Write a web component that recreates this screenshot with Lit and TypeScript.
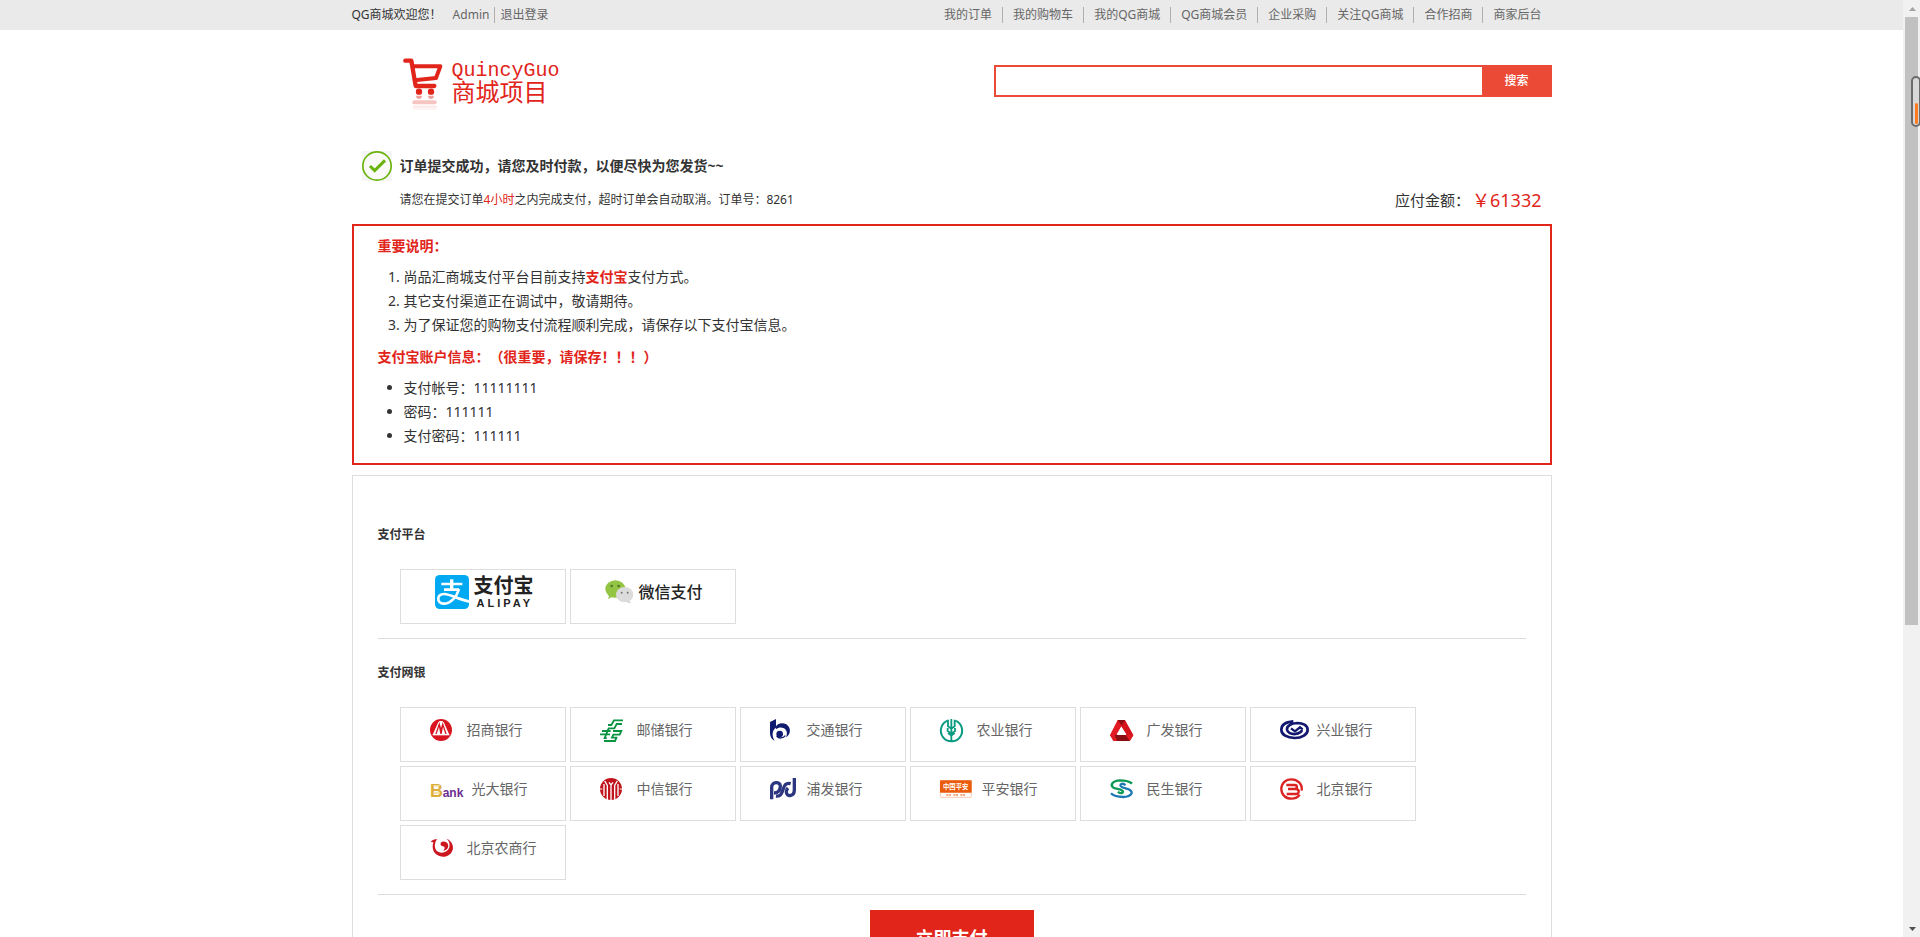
import { LitElement, html, css, svg, TemplateResult } from "lit";
import { customElement, state } from "lit/decorators.js";

interface PayOption {
  id: string;
  name: string;
  icon: TemplateResult;
  wide?: boolean;
}

const TOP_LINKS = [
  "我的订单",
  "我的购物车",
  "我的QG商城",
  "QG商城会员",
  "企业采购",
  "关注QG商城",
  "合作招商",
  "商家后台",
];

/* Glyphs are drawn on a grid three times finer than their size on the page. */
const glyph = (w: number, h: number, body: unknown) => html`
  <svg width=${w} height=${h} viewBox="0 0 ${w * 3} ${h * 3}" fill="none" aria-hidden="true">${body}</svg>
`;

const cartLogo = glyph(40, 54, svg`
  <g stroke="#e1251b" stroke-linecap="round" stroke-linejoin="round">
    <path stroke-width="13" d="M7 8H25L38 84H94"/>
    <path stroke-width="12" d="M34 25H112L99 60L42 66"/>
  </g>
  <circle cx="48" cy="101" r="9.5" fill="#e1251b"/>
  <circle cx="84" cy="101" r="9.5" fill="#e1251b"/>
  <path d="M39 113H57C57 126 39 126 39 113ZM75 113H93C93 126 75 126 75 113Z" fill="#f0a09c"/>
  <rect x="28" y="127" width="73" height="12" rx="6" fill="#f6c4c1"/>
  <rect x="29" y="143" width="72" height="6" fill="#fbe6e5"/>
  <rect x="30" y="149" width="70" height="7" fill="#fdf4f4"/>
`);

const checkIcon = glyph(30, 30, svg`
  <rect width="90" height="90" fill="#f5f5f5"/>
  <circle cx="45" cy="45" r="42.5" fill="#f9faf7" stroke="#6ab30c" stroke-width="5"/>
  <path d="M24 45L38 59L69 28" stroke="#6ab30c" stroke-width="9"/>
`);

const alipayIcon = glyph(34, 34, svg`
  <rect width="102" height="102" rx="14" fill="#00a9f1"/>
  <g stroke="#fff">
    <path stroke-width="8" d="M19 27H82M27 44H72"/>
    <path stroke-width="10" d="M50 13V46"/>
    <path stroke-width="8" d="M72 42C66 64 48 86 26 86C4 86 4 56 28 57C48 58 70 74 104 80"/>
  </g>
`);

const wechatIcon = glyph(29, 24, svg`
  <path d="M13 47L9 57L20 51Z" fill="#86b938"/>
  <ellipse cx="31" cy="27" rx="30" ry="26" fill="#93c444"/>
  <path d="M70 58L78 70L60 65Z" fill="#cfcfcf"/>
  <ellipse cx="59" cy="44" rx="26" ry="23" fill="#dcdcdc"/>
  <g fill="#55752a"><circle cx="20" cy="18" r="4"/><circle cx="41" cy="18" r="4"/></g>
  <g fill="#777"><circle cx="50" cy="38" r="3"/><circle cx="68" cy="38" r="3"/></g>
`);

const BANKS: PayOption[] = [
  { id: "cmb", name: "招商银行", icon: glyph(22, 22, svg`
    <circle cx="33" cy="33" r="33" fill="#d9141e"/>
    <path d="M8 47H58" stroke="#fff" stroke-width="4"/>
    <path d="M9 45L25 9L28 9L16 45ZM57 45L41 9L38 9L50 45Z" fill="#fff"/>
    <path d="M27 6L33 27L39 6ZM20 45L27 24L31 45ZM35 45L39 24L46 45Z" fill="#fff"/>`) },
  { id: "psbc", name: "邮储银行", icon: glyph(23, 23, svg`
    <g stroke="#0a9340" stroke-width="5.500">
      <path d="M69 4H42L34 18H24M66 15H50L43 28H26L14 57H20"/>
      <path d="M32 36H6M30 46H0M39 36H64L59 47H40L36 56H52M12 66H45L50 55"/>
    </g>`) },
  { id: "bcm", name: "交通银行", icon: glyph(20, 22, svg`
    <path d="M0 9L18 0V26C7 34 4 48 14 65C5 61 0 53 0 42Z" fill="#101a6e"/>
    <path d="M18 22C24 12 38 10 49 16C64 26 63 46 48 55C54 42 50 31 40 27C33 24 25 25 18 31Z" fill="#101a6e"/>
    <circle cx="29" cy="45" r="10" fill="#101a6e"/>
    <path d="M20 51C27 60 40 58 46 50" stroke="#101a6e" stroke-width="4"/>`) },
  { id: "abc", name: "农业银行", icon: glyph(23, 23, svg`
    <path d="M23 5A32 32 0 1 0 46 5" stroke="#0b9a82" stroke-width="6"/>
    <path d="M34 0V67M24 2V22L34 29L44 22V2M23 27V36L34 44L45 36V27M24 42L34 50L44 42" stroke="#0b9a82" stroke-width="5.500"/>`) },
  { id: "cgb", name: "广发银行", icon: glyph(24, 21, svg`
    <path d="M23 0H45L35 17L13 60L0 45Z" fill="#e21b22"/>
    <path d="M45 0L70 45L59 63L31 14L23 0Z" fill="#d5131b"/>
    <path d="M14 45H70L59 63H12L0 46Z" fill="#8c0d12"/>
    <path d="M23 0H45L35 16Z" fill="#8c0d12"/>
    <path d="M0 45H14L21 63H10Z" fill="#e21b22"/>
    <path d="M70 45L59 63L47 45Z" fill="#e21b22"/>
    <path d="M34 20L49 43H20Z" fill="#fff"/>`) },
  { id: "cib", name: "兴业银行", icon: glyph(29, 20, svg`
    <path d="M40 4C16 6 4 16 4 29C4 44 21 54 44 54C66 54 83 43 83 29C83 16 68 9 52 9C32 10 20 19 21 29C22 38 34 43 46 42C58 41 66 35 65 29" stroke="#12186f" stroke-width="8"/>
    <path d="M33 25L45 34L60 22L68 28" stroke="#12186f" stroke-width="7"/>`) },
  { id: "ceb", name: "光大银行", wide: true, icon: glyph(36, 20, svg`
    <g font-family="Liberation Sans, sans-serif" font-weight="bold">
      <text x="0" y="53" font-size="54" fill="#dcae3a">B</text>
      <text x="38" y="53" font-size="36" fill="#6a2c91">ank</text>
    </g>
    <path d="M10 20H30M10 42H30" stroke="#f1d98f" stroke-width="4"/>`) },
  { id: "citic", name: "中信银行", icon: glyph(22, 22, svg`
    <circle cx="33" cy="33" r="33" fill="#c1141c"/>
    <path d="M33 20V66M22 66V22L14 9M44 66V22L52 9M12 54V18M54 54V18M27 13L33 21L39 13" stroke="#fff" stroke-width="4"/>
    <path d="M0 33H7M59 33H66" stroke="#fff" stroke-width="3"/>`) },
  { id: "spdb", name: "浦发银行", icon: glyph(27, 22, svg`
    <g stroke="#2c3580" stroke-width="10">
      <path d="M5 64V28C5 10 31 9 31 25C31 38 25 45 12 45"/>
      <path d="M18 54C34 56 36 44 40 32C44 18 50 14 62 17"/>
      <path d="M73 0V36C73 56 49 58 49 42C49 36 51 33 54 30"/>
    </g>`) },
  { id: "pab", name: "平安银行", wide: true, icon: glyph(32, 18, svg`
    <rect x="1" y="2" width="93" height="50" rx="3" fill="#fff" stroke="#f3b08a" stroke-width="2"/>
    <rect x="0" y="1" width="95" height="37" rx="3" fill="#ea5b0c"/>
    <text x="47" y="27" font-size="19" font-weight="bold" text-anchor="middle" fill="#fff" font-family="Noto Sans CJK SC, sans-serif">中国平安</text>
    <path d="M19 45H34M40 45H55M61 45H76" stroke="#ef8a52" stroke-width="5" stroke-dasharray="6 2"/>`) },
  { id: "cmbc", name: "民生银行", icon: glyph(24, 20, svg`
    <g stroke-width="7">
      <path d="M66 14C56 4 42 4 30 4C8 5 0 17 9 25C16 31 32 29 38 36C42 42 30 46 24 38" stroke="#0b9a55"/>
      <path d="M3 43C13 54 28 54 40 54C62 53 71 42 61 34C54 27 37 29 32 21C29 14 40 11 46 19" stroke="#1b78b4"/>
    </g>`) },
  { id: "bob", name: "北京银行", icon: glyph(23, 22, svg`
    <path d="M65 38C68 17 52 4 34 4C16 4 4 17 4 33C4 49 16 62 34 62C44 62 54 58 59 50" stroke="#dc2323" stroke-width="7"/>
    <path d="M19 21H44C53 21 53 33 44 33H24M24 33H48C60 34 58 48 48 48H20" stroke="#dc2323" stroke-width="7"/>`) },
  { id: "bjrcb", name: "北京农商行", icon: glyph(24, 20, svg`
    <path d="M2 12C6 5 14 2 22 4C14 12 12 26 18 36C28 49 52 47 58 28C61 18 57 9 50 2C64 8 72 22 68 36C62 54 44 60 28 54C12 48 4 34 10 13Z" fill="#cc1620"/>
    <path d="M32 15C36 8 50 9 54 19C57 29 50 38 40 38C46 32 45 26 39 25C34 24 30 20 32 15Z" fill="#cc1620"/>`) },
];

@customElement("app-root")
export class AppRoot extends LitElement {
  @state() private selected = "";

  static styles = css`
    :host {
      display: flex;
      height: 100vh;
      overflow: hidden;
      background: #fff;
      color: #333;
      font: 12px/18px "Noto Sans", "Noto Sans CJK SC", sans-serif;
      text-spacing-trim: space-all;
    }
    * { box-sizing: border-box; }
    svg { display: block; flex: none; overflow: visible; }
    a { color: #666; text-decoration: none; }
    h1, h2, h3, p, ol, ul { margin: 0; padding: 0; }
    .page { flex: 1; min-width: 0; overflow: auto; scrollbar-width: none; }
    .wrap { max-width: 1200px; margin: 0 auto; }

    .topbar { background: #eaeaea; }
    .topbar .wrap { display: flex; justify-content: space-between; align-items: center; height: 30px; }
    .user { display: flex; align-items: center; line-height: 16px; }
    .user a { padding-left: 11px; }
    .user a + a { margin-left: 5px; padding-left: 5px; border-left: 1px solid #b3aeae; }
    .links { display: flex; list-style: none; line-height: 16px; }
    .links li { padding: 0 10px; }
    .links li + li { border-left: 1px solid #b3aeae; }

    .header { display: flex; justify-content: space-between; align-items: flex-start; padding: 28px 0 39px; }
    .logo { display: flex; gap: 9px; padding-left: 51px; color: #e1251b; }
    .logo-text { display: flex; flex-direction: column; padding-top: 1px; font: 20px/24px "Liberation Mono", "Noto Sans CJK SC", monospace; }
    .logo-sub { font-size: 24px; }
    .search { display: flex; width: 558px; margin-top: 7px; }
    .search input { flex: 1; min-width: 0; height: 32px; padding: 0 4px; border: 2px solid #ea4a36; border-right: 0; outline: 0; background: #fff; font: inherit; }
    .search button { width: 70px; height: 32px; padding: 0; border: 0; background: #ea4a36; color: #fff; font: inherit; font-weight: 500; cursor: pointer; }

    .success { padding: 0 10px; }
    .success-title { display: flex; align-items: center; gap: 8px; font-size: 14px; line-height: 30px; font-weight: bold; }
    .success-info { display: flex; justify-content: space-between; align-items: center; height: 38px; padding-left: 38px; }
    .red { color: #e1251b; }
    .amount { display: flex; align-items: center; gap: 2px; font-size: 15px; }
    .money { font-size: 18px; }

    .notice { margin-top: 5px; padding: 6px 24px 9px; border: 2px solid #e1251b; font-size: 14px; line-height: 24px; }
    .notice h2 { font-size: 14px; line-height: 28px; color: #e1251b; }
    .notice ol, .notice ul { padding: 5px 0 6px 26px; }

    .pay { margin-top: 10px; padding: 42px 25px; border: 1px solid #ddd; }
    .pay h3 { font-size: 12px; line-height: 34px; font-weight: bold; }
    .tiles { display: flex; flex-wrap: wrap; gap: 4px; padding: 17px 22px 14px; }
    .tile { position: relative; width: 166px; height: 55px; padding: 5px 0 0 29px; border: 1px solid #ddd; font-size: 14px; line-height: 34px; color: #666; cursor: pointer; }
    .tile input { position: absolute; inset: 0; margin: 0; opacity: 0; }
    .tile:has(input:focus-visible) { outline: 2px solid #e1251b; }
    .face { display: flex; align-items: center; height: 34px; }
    .slot { min-width: 37px; }
    .slot.wide { min-width: 42px; }
    .platform .tile { padding-left: 34px; }
    .platform .face { gap: 5px; }
    .brand { display: flex; flex-direction: column; color: #222; font-size: 20px; line-height: 22px; font-weight: bold; }
    .brand small { padding-left: 3px; font: bold 11px/12px "Liberation Sans", sans-serif; letter-spacing: 3px; }
    .wechat { color: #222; font-size: 16px; font-weight: 500; }
    .line { margin: 0; border: 0; border-top: 1px solid #ddd; }
    .banks { padding-top: 17px; }
    .submit { display: flex; justify-content: center; padding-top: 15px; }
    .submit button { width: 164px; height: 56px; padding: 0; border: 0; background: #e1251b; color: #fff; font: bold 18px/56px "Noto Sans", "Noto Sans CJK SC", sans-serif; cursor: pointer; }

    .rail { display: flex; flex-direction: column; align-items: center; width: 17px; background: #f1f1f1; }
    .arrow { height: 17px; padding: 7px 0 0 1px; }
    .track { flex: 1; width: 13px; }
    .thumb { height: 67.3%; background: #c1c1c1; }
    .meter { position: fixed; right: -1px; top: 76px; width: 10px; height: 51px; padding: 25px 1px 0; border: 2px solid #6b6b6b; border-radius: 5px; background: #d8d8d8; }
    .meter-fill { width: 3px; height: 21px; margin-left: 1px; border-radius: 2px; background: #ff7a1f; }
  `;

  private tile(id: string, label: string, content: unknown) {
    return html`<label class="tile">
      <input type="radio" name="pay" .value=${id} aria-label=${label}
        .checked=${this.selected === id} @change=${() => (this.selected = id)} />
      <span class="face">${content}</span>
    </label>`;
  }

  render() {
    return html`
      <div class="page">
        <nav class="topbar">
          <div class="wrap">
            <div class="user"><span>QG商城欢迎您！</span><a href="#">Admin</a><a href="#">退出登录</a></div>
            <ul class="links">${TOP_LINKS.map((t) => html`<li><a href="#">${t}</a></li>`)}</ul>
          </div>
        </nav>
        <header class="wrap header">
          <a class="logo" href="#">
            ${cartLogo}
            <span class="logo-text"><span>QuincyGuo</span><span class="logo-sub">商城项目</span></span>
          </a>
          <form class="search" @submit=${(e: Event) => e.preventDefault()}>
            <input type="text" aria-label="搜索" /><button type="submit">搜索</button>
          </form>
        </header>
        <main class="wrap">
          <section class="success">
            <h1 class="success-title">${checkIcon}<span>订单提交成功，请您及时付款，以便尽快为您发货~~</span></h1>
            <div class="success-info">
              <p>请您在提交订单<span class="red">4小时</span>之内完成支付，超时订单会自动取消。订单号：8261</p>
              <p class="amount"><span>应付金额：</span><span class="red money">￥61332</span></p>
            </div>
          </section>
          <section class="notice">
            <h2>重要说明：</h2>
            <ol>
              <li>尚品汇商城支付平台目前支持<b class="red">支付宝</b>支付方式。</li>
              <li>其它支付渠道正在调试中，敬请期待。</li>
              <li>为了保证您的购物支付流程顺利完成，请保存以下支付宝信息。</li>
            </ol>
            <h2>支付宝账户信息：（很重要，请保存！！！）</h2>
            <ul>
              <li>支付帐号：11111111</li>
              <li>密码：111111</li>
              <li>支付密码：111111</li>
            </ul>
          </section>
          <section class="pay">
            <h3>支付平台</h3>
            <div class="tiles platform">
              ${this.tile("alipay", "支付宝", html`${alipayIcon}<span class="brand">支付宝<small>ALIPAY</small></span>`)}
              ${this.tile("wechat", "微信支付", html`${wechatIcon}<span class="wechat">微信支付</span>`)}
            </div>
            <hr class="line" />
            <div class="banks">
              <h3>支付网银</h3>
              <div class="tiles">
                ${BANKS.map((b) => this.tile(b.id, b.name, html`<span class="slot ${b.wide ? "wide" : ""}">${b.icon}</span><span>${b.name}</span>`))}
              </div>
            </div>
            <hr class="line" />
            <div class="submit"><button type="button">立即支付</button></div>
          </section>
        </main>
      </div>
      <div class="rail" aria-hidden="true">
        <div class="arrow"><svg width="7" height="4" viewBox="0 0 7 4"><path d="M0 4L3.500 0L7 4Z" fill="#a3a3a3"/></svg></div>
        <div class="track"><div class="thumb"></div></div>
        <div class="arrow"><svg width="7" height="4" viewBox="0 0 7 4"><path d="M0 0H7L3.500 4Z" fill="#505050"/></svg></div>
      </div>
      <div class="meter" aria-hidden="true"><div class="meter-fill"></div></div>
    `;
  }
}
